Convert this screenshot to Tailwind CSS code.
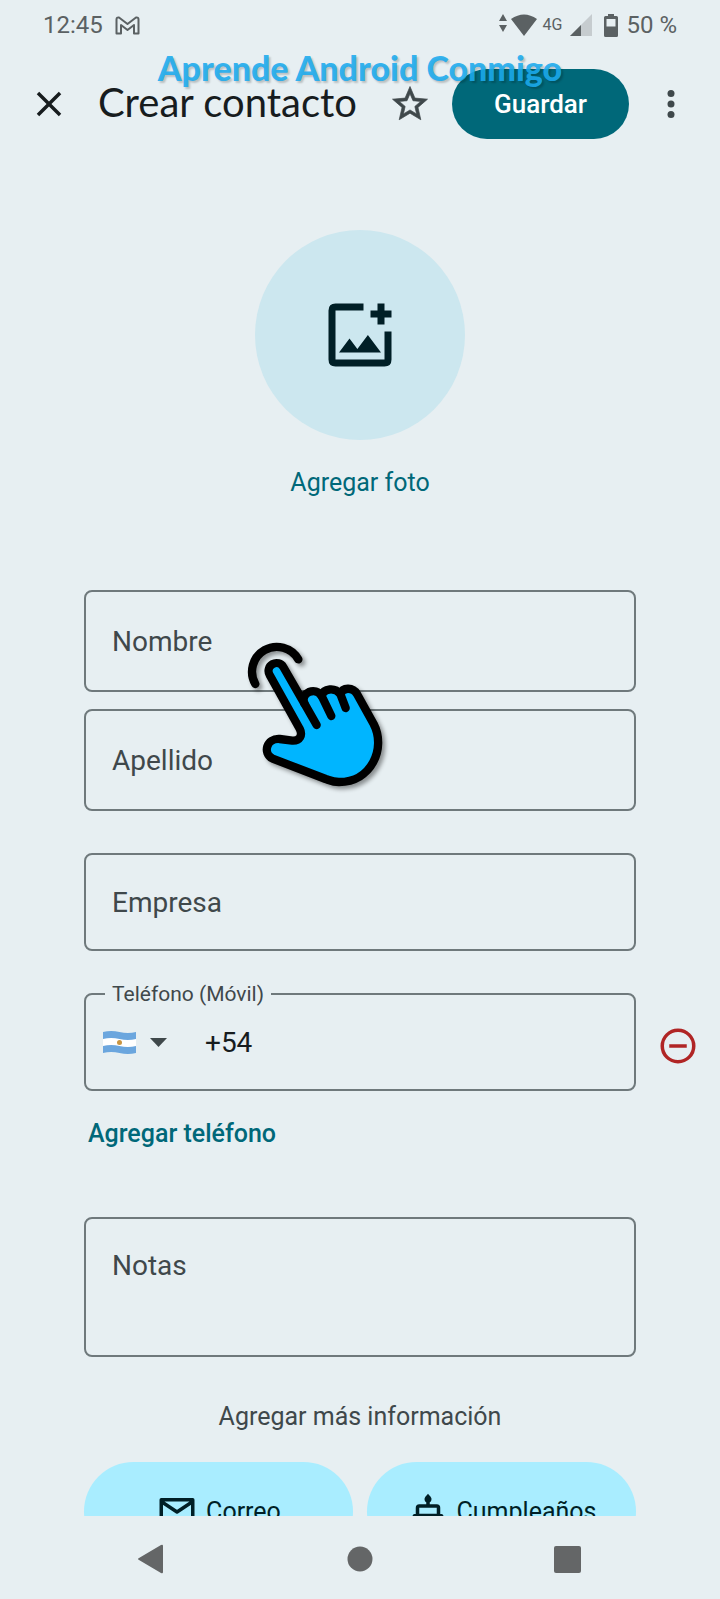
<!DOCTYPE html>
<html lang="es">
<head>
  <meta charset="UTF-8">
  <meta name="viewport" content="width=device-width, initial-scale=1.0">
  <title>Crear contacto</title>
  <script src="https://cdn.jsdelivr.net/npm/@tailwindcss/browser@4"></script>
</head>
<body class="bg-[#e7eff2] font-[Roboto,sans-serif] text-[#3f484b] h-screen flex flex-col overflow-hidden">

  <!-- Status bar -->
  <div class="relative h-[50px] shrink-0 pl-[43px] pr-[43px] flex items-center justify-between text-2xl text-[#5b6163]">
    <div class="flex items-center gap-3">
      <span>12:45</span>
      <svg class="w-[25px] h-[19px]" viewBox="0 0 25 19" fill="none" stroke="currentColor" stroke-width="2" stroke-linejoin="round">
        <path d="M1.500 3.500Q1.500 1 4 1.500L12.500 8L21 1.500Q23.500 1 23.500 3.500V17.500H19V9L12.500 14L6 9V17.500H1.500Z"/>
      </svg>
    </div>
    <div class="flex items-center">
      <svg class="w-[38px] h-[22px]" viewBox="0 0 38 22" fill="currentColor">
        <path d="M4 0L8 7H0ZM4 18L0 11H8ZM12 5Q25-4 38 5L25 22Z"/>
      </svg>
      <span class="text-base ml-[6px]">4G</span>
      <svg class="w-[22px] h-[22px] ml-2" viewBox="0 0 22 22">
        <path d="M22 0V22H0Z" fill="#c6cccf"/>
        <path d="M11 11V22H0Z" fill="currentColor"/>
      </svg>
      <svg class="w-[14px] h-[23px] ml-3" viewBox="0 0 14 23" fill="currentColor" fill-rule="evenodd">
        <path d="M4 0H10V2H12.500Q14 2 14 3.500V21.500Q14 23 12.500 23H1.500Q0 23 0 21.500V3.500Q0 2 1.500 2H4ZM2.500 5V12.500H11.500V5Z"/>
      </svg>
      <span class="ml-2">50 %</span>
    </div>
    <p class="absolute z-10 left-0 right-0 top-[45px] text-center text-[34px] leading-[46px] font-black font-[Lato,sans-serif] text-[#1cabee]/90 whitespace-nowrap [text-shadow:2px_2px_2px_#0003]">Aprende Android Conmigo</p>
  </div>

  <!-- Top bar -->
  <header class="h-[108px] shrink-0 flex items-center pl-7 pr-7 text-[#3f484b]">
    <button aria-label="Cerrar" class="text-[#171c1e]">
      <svg class="w-[42px] h-[42px]" viewBox="0 0 24 24" fill="currentColor"><path d="M19 6.400L17.600 5L12 10.600L6.400 5L5 6.400L10.600 12L5 17.600L6.400 19L12 13.400L17.600 19L19 17.600L13.400 12Z"/></svg>
    </button>
    <h1 class="ml-7 pb-1 grow text-[40px] leading-[48px] text-[#171c1e] font-[Lato,sans-serif] whitespace-nowrap">Crear contacto</h1>
    <button aria-label="Favorito">
      <svg class="w-[42px] h-[42px]" viewBox="0 0 24 24" fill="currentColor" stroke="currentColor" stroke-width=".4"><path d="M22 9.240l-7.190-.62L12 2 9.190 8.630 2 9.240l5.460 4.730L5.820 21 12 17.270 18.180 21l-1.630-7.030L22 9.240zM12 15.400l-3.760 2.270 1-4.280-3.320-2.880 4.380-.38L12 6.100l1.710 4.040 4.380.38-3.320 2.880 1 4.280L12 15.400z"/></svg>
    </button>
    <button class="ml-[21px] mr-[21px] w-[177px] h-[70px] rounded-full bg-[#006879] text-white text-[26px] font-medium">Guardar</button>
    <button aria-label="Más opciones">
      <svg class="w-[42px] h-[42px]" viewBox="0 0 24 24" fill="currentColor"><circle cx="12" cy="6" r="2"/><circle cx="12" cy="12" r="2"/><circle cx="12" cy="18" r="2"/></svg>
    </button>
  </header>

  <!-- Form -->
  <main class="grow min-h-0 overflow-hidden px-[84px] pt-[72px]">
    <div class="flex flex-col items-center">
      <button aria-label="Foto" class="w-[210px] h-[210px] rounded-full bg-[#cce7ef] flex items-center justify-center text-[#001f26]">
        <svg class="w-[84px] h-[84px]" viewBox="0 0 24 24" fill="currentColor"><path d="M17 3h2v2h2v2h-2v2h-2V7h-2V5h2zM13 3v2H5v14h14v-8h2v8q0 2-2 2H5q-2 0-2-2V5q0-2 2-2zM6 17h12l-3.750-5-3 4L9 13z"/></svg>
      </button>
      <button class="mt-[27px] text-[25px] leading-8 text-[#006879]">Agregar foto</button>
    </div>

    <div class="relative mt-[91px] flex flex-col gap-[17px]">
      <input type="text" aria-label="Nombre" placeholder="Nombre" class="w-full h-[102px] px-[26px] border-2 border-[#6f797c] rounded-[8px] text-[28px] placeholder:text-[#3f484b]">
      <input type="text" aria-label="Apellido" placeholder="Apellido" class="w-full h-[102px] px-[26px] border-2 border-[#6f797c] rounded-[8px] text-[28px] placeholder:text-[#3f484b]">

      <!-- Tap pointer -->
      <svg class="absolute left-[159px] top-[50px] w-[144px] h-[152px] pointer-events-none drop-shadow-[3px_3px_2px_#0006]" viewBox="520 180 432 456" fill="none" stroke="#000" stroke-width="25" stroke-linecap="round" stroke-linejoin="round">
        <path d="M557 312A74 74 0 0 1 686 238"/>
        <path fill="#00b5ff" d="M600 285A23 23 0 0 1 641 261L704 370C692 338 738 318 756 348C762 324 796 322 812 342C820 320 850 322 862 342L912 432C950 505 905 606 808 606C790 606 780 601 768 597L609 536C578 520 590 474 630 477L668 482C690 483 700 466 690 446Z"/>
        <path d="M704 370L741 435M756 348L785 408M812 342L828 384"/>
      </svg>
    </div>

    <input type="text" aria-label="Empresa" placeholder="Empresa" class="block mt-[42px] w-full h-[98px] px-[26px] border-2 border-[#6f797c] rounded-[8px] text-[28px] placeholder:text-[#3f484b]">

    <div class="relative mt-[30px]">
      <fieldset class="h-[110px] px-[17px] border-2 border-[#6f797c] rounded-[8px]">
        <legend class="ml-[2px] px-[7px] text-[21px] leading-[26px]"><label for="telefono">Teléfono (Móvil)</label></legend>
        <div class="h-[70px] flex items-center">
          <div class="relative flex items-center gap-[14px] h-12">
            <svg class="w-[33px] h-[23px]" viewBox="0 0 33 23">
              <path d="M0 1Q8-1 16.500 1T33 1V22Q25 24 16.500 22T0 22Z" fill="#6ba6de"/>
              <path d="M0 8Q8 6 16.500 8T33 8V15Q25 17 16.500 15T0 15Z" fill="#fff"/>
              <circle cx="16.500" cy="11.500" r="2.500" fill="#c89542"/>
            </svg>
            <svg class="w-[17px] h-[9px]" viewBox="0 0 17 9" fill="currentColor"><path d="M0 0H17L8.500 9Z"/></svg>
            <select aria-label="País" class="absolute inset-0 w-full appearance-none text-transparent">
              <option></option>
            </select>
          </div>
          <input id="telefono" type="tel" value="+54" class="grow min-w-0 ml-[38px] h-12 text-[28px] text-[#171c1e]">
        </div>
      </fieldset>
      <button aria-label="Quitar teléfono" class="absolute -right-[63px] top-[44px] text-[#b02525]">
        <svg class="w-[42px] h-[42px]" viewBox="0 0 24 24" fill="none" stroke="currentColor" stroke-width="2"><circle cx="12" cy="12" r="9"/><path d="M7 12H17"/></svg>
      </button>
    </div>

    <button class="block mt-[27px] ml-1 text-[25px] leading-8 font-medium text-[#006879]">Agregar teléfono</button>

    <textarea aria-label="Notas" placeholder="Notas" class="block mt-[67px] w-full h-[140px] px-[26px] py-[31px] border-2 border-[#6f797c] rounded-[8px] text-[28px] leading-8 resize-none placeholder:text-[#3f484b]"></textarea>

    <h2 class="mt-[44px] text-center text-[25px] leading-8">Agregar más información</h2>

    <div class="mt-[29px] grid grid-cols-2 gap-[14px] text-[25px] text-[#001f26]">
      <button class="h-[99px] rounded-full bg-[#a9edff] flex items-center justify-center gap-2">
        <svg class="w-[42px] h-[42px]" viewBox="0 0 24 24" fill="none" stroke="currentColor" stroke-width="2" stroke-linejoin="round"><path d="M3 5H21V19H3ZM3 6L12 12L21 6"/></svg>
        Correo
      </button>
      <button class="h-[99px] rounded-full bg-[#a9edff] flex items-center justify-center gap-2">
        <svg class="w-[42px] h-[42px]" viewBox="0 0 24 24" fill="none" stroke="currentColor" stroke-width="2" stroke-linejoin="round">
          <path d="M6 14V9.500Q6 8.500 7 8.500H17Q18 8.500 18 9.500V14M4 21V15Q4 14 5 14H19Q20 14 20 15V21M2 21H22M12 8V5"/>
          <path d="M12 1.500Q14 3.500 14 4.500A2 2 0 0 1 10 4.500Q10 3.500 12 1.500Z" fill="currentColor" stroke="none"/>
        </svg>
        Cumpleaños
      </button>
    </div>
  </main>

  <!-- System navigation -->
  <nav class="h-[83px] shrink-0 bg-[#e7eff2] pt-[2px] pl-[134px] pr-[136px] flex items-center justify-between text-[#646667]">
    <button aria-label="Atrás"><svg class="w-8 h-8" viewBox="0 0 32 32" fill="currentColor"><path d="M5 15L27 2Q29 1 29 3V29Q29 31 27 30L5 17Q3 16 5 15Z"/></svg></button>
    <button aria-label="Inicio"><svg class="w-8 h-8" viewBox="0 0 32 32" fill="currentColor"><circle cx="17" cy="16" r="12.500"/></svg></button>
    <button aria-label="Recientes"><svg class="w-8 h-8" viewBox="0 0 32 32" fill="currentColor"><rect x="2" y="3" width="27" height="27" rx="2"/></svg></button>
  </nav>
</body>
</html>
